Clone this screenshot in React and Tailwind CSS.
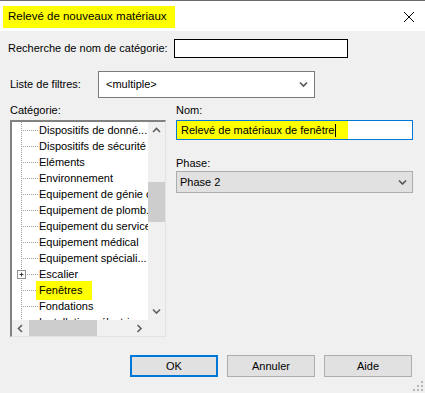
import React from "react";

const items = [
  "Dispositifs de donné...",
  "Dispositifs de sécurité",
  "Eléments",
  "Environnement",
  "Equipement de génie c",
  "Equipement de plomb..",
  "Equipement du service",
  "Equipement médical",
  "Equipement spéciali...",
  "Escalier",
  "Fenêtres",
  "Fondations",
  "Installations électriques",
];

function Chevron({ dir = "down", className = "" }) {
  const paths = {
    down: "M1 1.5 L4.5 5 L8 1.5",
    up: "M1 5 L4.5 1.5 L8 5",
    left: "M5 1 L1.5 4.5 L5 8",
    right: "M1.5 1 L5 4.5 L1.5 8",
  };
  const wh = dir === "down" || dir === "up" ? [9, 6.5] : [6.5, 9];
  return (
    <svg width={wh[0]} height={wh[1]} viewBox={`0 0 ${wh[0]} ${wh[1]}`} className={className}>
      <path d={paths[dir]} fill="none" stroke="currentColor" strokeWidth="1.6" />
    </svg>
  );
}

function TreeRow({ label, expander, highlight }) {
  return (
    <div className="flex h-[16px] items-center whitespace-nowrap">
      <svg width="27" height="16" className="shrink-0">
        <line x1="9.5" y1="0" x2="9.5" y2="16" stroke="#a0a0a0" strokeDasharray="1 1" />
        <line x1="11" y1="8.5" x2="26" y2="8.5" stroke="#a0a0a0" strokeDasharray="1 1" />
        {expander && (
          <g>
            <rect x="5.5" y="4.5" width="8" height="8" fill="#fff" stroke="#919191" />
            <line x1="7.5" y1="8.5" x2="11.5" y2="8.5" stroke="#3c3c3c" />
            <line x1="9.5" y1="6.5" x2="9.5" y2="10.5" stroke="#3c3c3c" />
          </g>
        )}
      </svg>
      {highlight ? (
        <span className="-ml-[3px] bg-[#ffff00] py-[2px] pl-[3px] pr-[10px] leading-[15px]">{label}</span>
      ) : (
        <span>{label}</span>
      )}
    </div>
  );
}

export default function App() {
  return (
    <div
      className="relative h-[393px] w-[425px] overflow-hidden bg-[#f0f0f0] text-[11px] text-black"
      style={{ fontFamily: '"Liberation Sans", Arial, sans-serif' }}
    >
      {/* Title bar */}
      <div className="flex h-[31px] items-center justify-between border-t border-[#6b6b6b] bg-white">
        <div className="ml-[3px] mt-[2px] flex h-[22px] items-center bg-[#ffff00] pl-[5px] pr-[8px] text-[11.5px]">
          Relevé de nouveaux matériaux
        </div>
        <svg width="12" height="12" viewBox="0 0 12 12" className="mr-[10px] mt-[1px]">
          <path d="M1 1 L11 11 M11 1 L1 11" stroke="#000" strokeWidth="1" />
        </svg>
      </div>

      {/* Search row */}
      <div className="mt-[8px] flex items-center">
        <span className="ml-[8px] w-[166px]">Recherche de nom de catégorie:</span>
        <div className="h-[19px] w-[174px] border border-black bg-white" />
      </div>

      {/* Filter row */}
      <div className="mt-[13px] flex items-center">
        <span className="ml-[10px] w-[88px]">Liste de filtres:</span>
        <div className="flex h-[27px] w-[217px] items-center justify-between border border-[#7a7a7a] bg-white pl-[7px] pr-[6px]">
          <span>&lt;multiple&gt;</span>
          <Chevron dir="down" className="text-[#555]" />
        </div>
      </div>

      {/* Main section */}
      <div className="mt-[4px] flex">
        {/* Left column */}
        <div className="ml-[10px] flex w-[156px] flex-col">
          <span className="h-[16px]">Catégorie:</span>
          <div className="mt-[2px] flex h-[217px] flex-col border-l-2 border-t-2 border-[#828282] border-b border-r border-b-[#e3e3e3] border-r-[#e3e3e3] bg-white">
            <div className="flex min-h-0 flex-1">
              <div className="min-w-0 flex-1 overflow-hidden">
                {items.map((it, i) => (
                  <TreeRow key={it} label={it} expander={i === 9} highlight={i === 10} />
                ))}
              </div>
              {/* vertical scrollbar */}
              <div className="flex w-[17px] shrink-0 flex-col bg-[#f0f0f0]">
                <div className="flex h-[17px] items-center justify-center text-[#606060]">
                  <Chevron dir="up" />
                </div>
                <div className="h-[43px]" />
                <div className="h-[40px] bg-[#cdcdcd]" />
                <div className="flex-1" />
                <div className="flex h-[17px] items-center justify-center text-[#606060]">
                  <Chevron dir="down" />
                </div>
              </div>
            </div>
            {/* horizontal scrollbar */}
            <div className="flex h-[16px] shrink-0">
              <div className="flex flex-1 bg-[#f0f0f0]">
                <div className="flex w-[17px] items-center justify-center text-[#606060]">
                  <Chevron dir="left" />
                </div>
                <div className="w-[68px] bg-[#cdcdcd]" />
                <div className="flex-1" />
                <div className="flex w-[17px] items-center justify-center text-[#606060]">
                  <Chevron dir="right" />
                </div>
              </div>
              <div className="w-[17px] bg-[#f0f0f0]" />
            </div>
          </div>
        </div>

        {/* Right column */}
        <div className="ml-[10px] flex w-[237px] flex-col">
          <span className="h-[16px]">Nom:</span>
          <div className="mt-[2px] flex h-[20px] items-stretch border border-[#0078d7] bg-white">
            <div className="flex items-center bg-[#ffff00] pl-[4px] pr-[12px]">
              <span>Relevé de matériaux de fenêtre</span>
              <span className="ml-[1px] inline-block h-[13px] w-[1px] bg-black" />
            </div>
          </div>
          <span className="mt-[15px] h-[16px]">Phase:</span>
          <div className="mt-[0px] flex h-[22px] items-center justify-between border border-[#adadad] bg-[#e1e1e1] pl-[3px] pr-[5px]">
            <span>Phase 2</span>
            <Chevron dir="down" className="text-[#555]" />
          </div>
        </div>
      </div>

      {/* Buttons */}
      <div className="mt-[18px] flex justify-end gap-[9px] pr-[13px]">
        <button className="h-[22px] w-[88px] border-2 border-[#0078d7] bg-[#e1e1e1]">OK</button>
        <button className="h-[22px] w-[88px] border border-[#adadad] bg-[#e1e1e1]">Annuler</button>
        <button className="h-[22px] w-[88px] border border-[#adadad] bg-[#e1e1e1]">Aide</button>
      </div>

      {/* Resize grip */}
      <svg width="12" height="12" className="absolute bottom-[1px] right-[1px]">
        {[
          [9, 1], [9, 5], [5, 5], [9, 9], [5, 9], [1, 9],
        ].map(([x, y], i) => (
          <rect key={i} x={x} y={y} width="2" height="2" fill="#b8b8b8" />
        ))}
      </svg>
    </div>
  );
}
